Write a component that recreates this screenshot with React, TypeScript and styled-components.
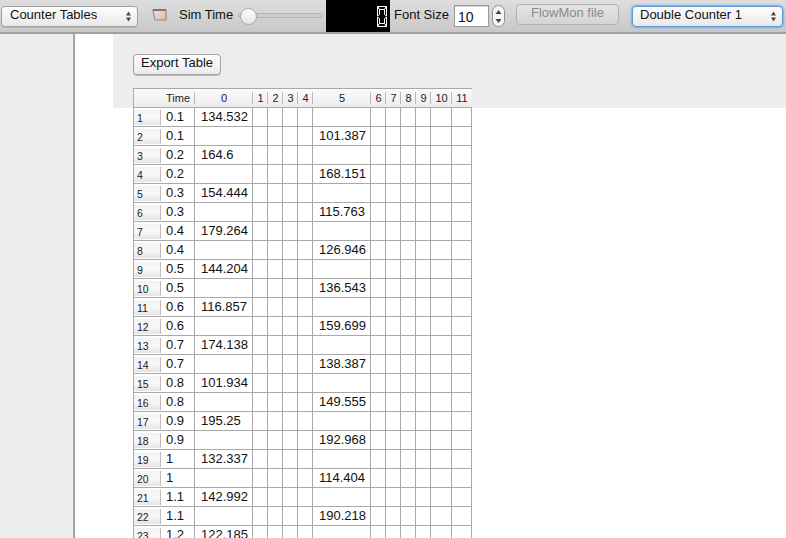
import React from "react";
import styled, { createGlobalStyle } from "styled-components";

const Global = createGlobalStyle`
  html, body { margin: 0; padding: 0; height: 100%; overflow: hidden; background: #ededed; }
  body { font-family: "Liberation Sans", Arial, sans-serif; color: #111; }
`;

const Page = styled.div`
  width: 786px;
  height: 538px;
  display: flex;
  flex-direction: column;
  overflow: hidden;
`;

const Toolbar = styled.div`
  height: 32px;
  flex: none;
  display: flex;
  align-items: flex-start;
  background: linear-gradient(#dedede, #c8c8c8);
  border-bottom: 2px solid #a0a0a0;
`;

const SelectBox = styled.div<{ $w: number; $ml: number; $pl: number; $focus?: boolean }>`
  box-sizing: border-box;
  width: ${(p) => p.$w}px;
  height: 21px;
  margin: 6px 0 0 ${(p) => p.$ml}px;
  padding: 0 0 5px ${(p) => p.$pl}px;
  display: flex;
  align-items: center;
  justify-content: space-between;
  font-size: 13px;
  background: linear-gradient(#fdfdfd, #e9e9e9);
  border: 1px solid ${(p) => (p.$focus ? "#5f98d6" : "#a2a2a2")};
  border-radius: 4px;
  box-shadow: ${(p) => (p.$focus ? "0 0 2px 1px #78ace6" : "0 1px 0 #b5b5b5")};
`;

const Arrows = styled.svg`
  width: 5px;
  height: 11px;
  margin: 5px 6px 0 0;
  flex: none;
`;

const SelectArrows = () => (
  <Arrows viewBox="0 0 5 11">
    <path d="M2.5 0.5 L5 4.5 H0 Z M2.5 10.5 L5 6.5 H0 Z" fill="#444" />
  </Arrows>
);

const ClockIcon = styled.svg`
  width: 15px;
  height: 12px;
  margin: 9px 0 0 14px;
  flex: none;
`;

const Label = styled.span<{ $ml: number; $w: number }>`
  width: ${(p) => p.$w}px;
  margin: 7px 0 0 ${(p) => p.$ml}px;
  flex: none;
  font-size: 13px;
  line-height: 15px;
  white-space: nowrap;
  color: #111;
`;

const Slider = styled.div`
  position: relative;
  width: 85px;
  height: 5px;
  margin: 13px 0 0 6px;
  flex: none;
  border: 1px solid #b4b4b4;
  border-radius: 3px;
  background: #cccccc;
  box-sizing: border-box;
`;

const Thumb = styled.div`
  position: absolute;
  left: 1px;
  top: -6px;
  width: 17px;
  height: 17px;
  box-sizing: border-box;
  border-radius: 50%;
  border: 1px solid #a8a8a8;
  background: linear-gradient(#fbfbfb, #e6e6e6);
`;

const Lcd = styled.div`
  width: 64px;
  height: 32px;
  margin-left: 3px;
  flex: none;
  background: #000;
  display: flex;
  justify-content: flex-end;
  align-items: flex-start;
`;

const LcdDigit = styled.svg`
  width: 10px;
  height: 21px;
  margin: 6px 3px 0 0;
`;

const NumberInput = styled.div`
  box-sizing: border-box;
  width: 35px;
  height: 22px;
  margin: 5px 0 0 6px;
  flex: none;
  padding: 3px 0 0 3px;
  font-size: 14px;
  line-height: 16px;
  background: #fff;
  border: 1px solid #9a9a9a;
  box-shadow: inset 0 1px 0 #d0d0d0;
`;

const Stepper = styled.svg`
  width: 13px;
  height: 22px;
  margin: 5px 0 0 3px;
  flex: none;
`;

const FileButton = styled.div`
  box-sizing: border-box;
  width: 103px;
  height: 21px;
  margin: 4px 0 0 11px;
  flex: none;
  text-align: center;
  font-size: 13px;
  line-height: 16px;
  color: #8a8a8a;
  background: linear-gradient(#e4e4e4, #d4d4d4);
  border: 1px solid #b2b2b2;
  border-radius: 4px;
`;

const Body = styled.div`
  flex: 1;
  min-height: 0;
  display: flex;
`;

const LeftPane = styled.div`
  width: 73px;
  flex: none;
  background: #ededed;
  border-right: 2px solid #a6a6a6;
`;

const Gutter = styled.div`
  width: 38px;
  flex: none;
  background: #fff;
`;

const Content = styled.div`
  flex: 1;
  min-width: 0;
  display: flex;
  flex-direction: column;
`;

const ActionBar = styled.div`
  height: 54px;
  flex: none;
  box-sizing: border-box;
  padding: 20px 0 0 20px;
  background: #ededed;
`;

const ExportButton = styled.div`
  box-sizing: border-box;
  width: 88px;
  height: 21px;
  text-align: center;
  font-size: 13px;
  line-height: 16px;
  background: linear-gradient(#fdfdfd, #ececec);
  border: 1px solid #a2a2a2;
  border-radius: 4px;
  box-shadow: 0 1px 0 #bbb;
`;

const TableArea = styled.div`
  flex: 1;
  min-height: 0;
  padding-left: 20px;
  background: linear-gradient(#ededed 20px, #fff 20px);
  overflow: hidden;
  display: flex;
`;

const COLUMNS = "27px 34px 58px 15px 15px 15px 15px 58px 15px 15px 15px 15px 21px 20px";

const Grid = styled.div`
  display: grid;
  grid-template-columns: ${COLUMNS};
  grid-auto-rows: 19px;
  align-content: start;
  box-sizing: border-box;
  border-top: 1px solid #a9a9a9;
  border-left: 1px solid #a9a9a9;
  font-size: 13px;
`;

const HeaderCell = styled.div<{ $last?: boolean }>`
  height: 19px;
  box-sizing: border-box;
  text-align: center;
  font-size: 11px;
  line-height: 19px;
  color: #222;
  background: linear-gradient(#fbfbfb, #ececec);
  border-bottom: 1px solid #a9a9a9;
  position: relative;
  &::after {
    content: "";
    position: absolute;
    right: 0;
    top: 3px;
    bottom: 3px;
    width: 1px;
    background: ${(p) => (p.$last ? "transparent" : "#b8b8b8")};
  }
`;

const RowHead = styled.div`
  box-sizing: border-box;
  border-bottom: 1px solid #a9a9a9;
  background: #fff;
  padding-top: 2px;
`;

const RowButton = styled.div`
  box-sizing: border-box;
  width: 27px;
  height: 15px;
  font-size: 10.5px;
  line-height: 16px;
  padding-left: 3px;
  color: #222;
  background: linear-gradient(#f3f3f3, #f8f8f8 50%, #e4e4e4);
  border-right: 1px solid #bdbdbd;
`;

const Cell = styled.div`
  box-sizing: border-box;
  padding-left: 6px;
  line-height: 18px;
  font-size: 13px;
  color: #111;
  white-space: nowrap;
  background: #fff;
  border-bottom: 1px solid #a9a9a9;
  border-right: 1px solid #a9a9a9;
`;

const TimeCell = styled(Cell)`
  padding-left: 5px;
`;

const headers = ["", "Time", "0", "1", "2", "3", "4", "5", "6", "7", "8", "9", "10", "11"];

const rows: [string, string, string][] = [
  ["0.1", "134.532", ""],
  ["0.1", "", "101.387"],
  ["0.2", "164.6", ""],
  ["0.2", "", "168.151"],
  ["0.3", "154.444", ""],
  ["0.3", "", "115.763"],
  ["0.4", "179.264", ""],
  ["0.4", "", "126.946"],
  ["0.5", "144.204", ""],
  ["0.5", "", "136.543"],
  ["0.6", "116.857", ""],
  ["0.6", "", "159.699"],
  ["0.7", "174.138", ""],
  ["0.7", "", "138.387"],
  ["0.8", "101.934", ""],
  ["0.8", "", "149.555"],
  ["0.9", "195.25", ""],
  ["0.9", "", "192.968"],
  ["1", "132.337", ""],
  ["1", "", "114.404"],
  ["1.1", "142.992", ""],
  ["1.1", "", "190.218"],
  ["1.2", "122.185", ""],
];

const Blank = ({ n }: { n: number }) => (
  <>
    {Array.from({ length: n }, (_, i) => (
      <Cell key={i} />
    ))}
  </>
);

export default function App() {
  return (
    <Page>
      <Global />
      <Toolbar>
        <SelectBox $w={137} $ml={1} $pl={8}>
          Counter Tables
          <SelectArrows />
        </SelectBox>
        <ClockIcon viewBox="0 0 15 12">
          <defs>
            <linearGradient id="simIcon" x1="0" y1="0" x2="1" y2="1">
              <stop offset="0" stopColor="#f3e4d2" />
              <stop offset="1" stopColor="#e0b9a8" />
            </linearGradient>
          </defs>
          <path d="M1 1 H14 V11 H3 Z" fill="url(#simIcon)" stroke="#8e8e8e" strokeWidth="1.2" />
          <path d="M1 1 H14" stroke="#777" strokeWidth="2" />
        </ClockIcon>
        <Label $ml={12} $w={53}>Sim Time</Label>
        <Slider>
          <Thumb />
        </Slider>
        <Lcd>
          <LcdDigit viewBox="0 0 10 21" fill="#000" stroke="#fff" strokeWidth="1">
            <path d="M0.5 0.5 H9.5 L7.5 3.5 H2.5 Z" />
            <path d="M0.5 0.5 L2.5 3.5 V8.5 L0.5 10 Z" />
            <path d="M9.5 0.5 L7.5 3.5 V8.5 L9.5 10 Z" />
            <path d="M0.5 11 L2.5 12.5 V17.5 L0.5 20.5 Z" />
            <path d="M9.5 11 L7.5 12.5 V17.5 L9.5 20.5 Z" />
            <path d="M0.5 20.5 H9.5 L7.5 17.5 H2.5 Z" />
          </LcdDigit>
        </Lcd>
        <Label $ml={4} $w={54}>Font Size</Label>
        <NumberInput>10</NumberInput>
        <Stepper viewBox="0 0 13 22">
          <rect x="0.5" y="0.5" width="12" height="21" rx="6" fill="#f6f6f6" stroke="#8e8e8e" />
          <path d="M6.5 5 L9.5 9 H3.5 Z M6.5 18 L9.5 14 H3.5 Z" fill="#444" />
        </Stepper>
        <FileButton>FlowMon file</FileButton>
        <SelectBox $w={151} $ml={13} $pl={7} $focus>
          Double Counter 1
          <SelectArrows />
        </SelectBox>
      </Toolbar>
      <Body>
        <LeftPane />
        <Gutter />
        <Content>
          <ActionBar>
            <ExportButton>Export Table</ExportButton>
          </ActionBar>
          <TableArea>
            <Grid>
              {headers.map((h, i) => (
                <HeaderCell key={i} $last={i === 0 || i === headers.length - 1}>
                  {h}
                </HeaderCell>
              ))}
              {rows.map((r, i) => (
                <React.Fragment key={i}>
                  <RowHead>
                    <RowButton>{i + 1}</RowButton>
                  </RowHead>
                  <TimeCell>{r[0]}</TimeCell>
                  <Cell>{r[1]}</Cell>
                  <Blank n={4} />
                  <Cell>{r[2]}</Cell>
                  <Blank n={6} />
                </React.Fragment>
              ))}
            </Grid>
          </TableArea>
        </Content>
      </Body>
    </Page>
  );
}
